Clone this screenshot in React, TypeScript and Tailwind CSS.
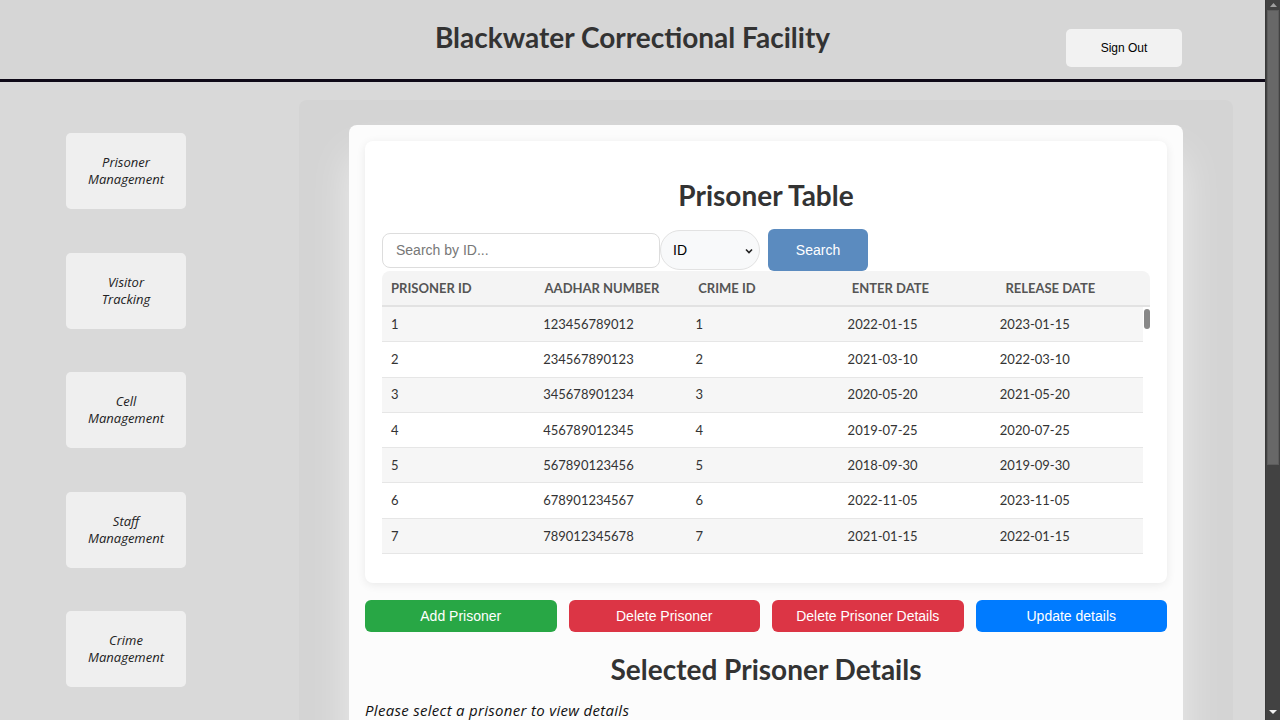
import React from 'react';

const navItems = ['Prisoner Management', 'Visitor Tracking', 'Cell Management', 'Staff Management', 'Crime Management'];

const prisoners = [
    { id: 1, aadhar: '123456789012', crime: 1, enter: '2022-01-15', release: '2023-01-15' },
    { id: 2, aadhar: '234567890123', crime: 2, enter: '2021-03-10', release: '2022-03-10' },
    { id: 3, aadhar: '345678901234', crime: 3, enter: '2020-05-20', release: '2021-05-20' },
    { id: 4, aadhar: '456789012345', crime: 4, enter: '2019-07-25', release: '2020-07-25' },
    { id: 5, aadhar: '567890123456', crime: 5, enter: '2018-09-30', release: '2019-09-30' },
    { id: 6, aadhar: '678901234567', crime: 6, enter: '2022-11-05', release: '2023-11-05' },
    { id: 7, aadhar: '789012345678', crime: 7, enter: '2021-01-15', release: '2022-01-15' },
];

const SideButton: React.FC<{ label: string }> = ({ label }) => (
    <button className="w-[120px] h-[76px] rounded-[5px] bg-[#efefef] px-[18px] text-[13px] leading-[17px] italic font-medium text-[#222] font-['Open_Sans',sans-serif]">
        {label}
    </button>
);

// headless shots hide native scrollbars, so the page one is drawn by hand
const PageScrollbar = () => (
    <div className="w-[15px] shrink-0 flex flex-col bg-[#424242] border-l border-[#3a3a3a]">
        <div className="h-[10px] flex items-center justify-center">
            <svg width="7" height="4" viewBox="0 0 7 4">
                <path d="M0 4L3.5 0L7 4z" fill="#a0a0a0" />
            </svg>
        </div>
        <div className="mx-[1px] h-[455px] bg-[#686868] border border-[#5c5c5c]" />
        <div className="flex-1" />
        <div className="h-[16px] flex items-center justify-center">
            <svg width="8" height="4" viewBox="0 0 8 4">
                <path d="M0 0L4 4L8 0z" fill="#f0f0f0" />
            </svg>
        </div>
    </div>
);

export default function App() {
    return (
        <div className="h-screen overflow-hidden flex bg-[#d9d9d9] font-['Liberation_Sans',Arial,sans-serif]">
            <div className="flex-1 min-w-0">
                {/* Header */}
                <header className="grid grid-cols-[1fr_auto_1fr] h-[82px] bg-[#d6d6d6] border-b-[3px] border-[#0f0a18]">
                    <div />
                    <h1 className="pt-[19px] text-[28px] leading-[36px] font-bold text-[#333] font-['Lato',sans-serif]">
                        Blackwater Correctional Facility
                    </h1>
                    <div className="flex justify-end pr-[83px] pt-[29px]">
                        <button className="w-[116px] h-[38px] rounded-[5px] bg-[#f2f2f2] text-[12px] text-black">Sign Out</button>
                    </div>
                </header>

                <div className="flex pt-[18px]">
                    {/* Sidebar */}
                    <nav className="w-[252px] shrink-0 flex flex-col items-center gap-[43.5px] pt-[33px]">
                        {navItems.map((item) => (
                            <SideButton key={item} label={item} />
                        ))}
                    </nav>

                    {/* Main */}
                    <main className="ml-[47px] w-[934px] rounded-[8px] bg-[#d4d4d4] px-[50px] pt-[25px] pb-[60px]">
                        <div className="rounded-[8px] bg-[#fcfcfc] p-[16px] pb-[300px] shadow-[0_30px_40px_rgba(255,255,255,0.55)]">
                            <section className="rounded-[8px] bg-white px-[17px] pt-[36px] pb-[29px] shadow-[0_2px_10px_rgba(0,0,0,0.08)]">
                                <h2 className="text-center text-[28px] leading-[36px] font-bold text-[#333] font-['Lato',sans-serif]">
                                    Prisoner Table
                                </h2>
                                <div className="mt-[16px] flex items-center">
                                    <input
                                        placeholder="Search by ID..."
                                        className="w-[278px] h-[35px] rounded-[8px] border border-[#ddd] bg-white px-[13px] text-[14px] text-[#333] placeholder:text-[#777] outline-none"
                                    />
                                    <div className="relative w-[100px] h-[40px] rounded-[20px] border border-[#e2e2e2] bg-[#f8f9fa] flex items-center pl-[12px] text-[14px] text-black">
                                        ID
                                        <svg className="absolute right-[6px] top-[17px]" width="8" height="6" viewBox="0 0 8 6">
                                            <path d="M1 1.5l3 3 3-3" fill="none" stroke="#222" strokeWidth="1.6" />
                                        </svg>
                                    </div>
                                    <button className="ml-[8px] w-[100px] h-[42px] rounded-[6px] bg-[#5b8bbf] text-[14px] text-white">Search</button>
                                </div>

                                {/* Table */}
                                <div className="font-['Lato',sans-serif]">
                                    <div className="grid grid-cols-5 h-[36px] items-center rounded-t-[8px] bg-[#f4f4f4] border-b-2 border-[#e2e2e2] pt-[1px] text-[13px] font-bold uppercase text-[#555]">
                                        <span className="pl-[9px]">Prisoner ID</span>
                                        <span className="pl-[9px]">Aadhar Number</span>
                                        <span className="pl-[9px]">Crime ID</span>
                                        <span className="pl-[9px]">Enter Date</span>
                                        <span className="pl-[9px]">Release Date</span>
                                    </div>
                                    <div className="flex">
                                        <div className="flex-1">
                                            {prisoners.map((p, i) => (
                                                <div
                                                    key={p.id}
                                                    className={`grid grid-cols-5 h-[35.3px] items-center border-b border-[#e6e6e6] pt-[1px] text-[13px] text-[#333] ${i % 2 === 0 ? 'bg-[#f6f6f6]' : 'bg-white'}`}
                                                >
                                                    <span className="pl-[9px]">{p.id}</span>
                                                    <span className="pl-[9px]">{p.aadhar}</span>
                                                    <span className="pl-[9px]">{p.crime}</span>
                                                    <span className="pl-[9px]">{p.enter}</span>
                                                    <span className="pl-[9px]">{p.release}</span>
                                                </div>
                                            ))}
                                        </div>
                                        {/* inner scrollbar */}
                                        <div className="w-[7px] pt-[2px] pl-[1px]">
                                            <div className="h-[20px] rounded-[3px] bg-[#888]" />
                                        </div>
                                    </div>
                                </div>
                            </section>

                            <div className="mt-[17px] grid grid-cols-4 gap-[12px] text-[14px] text-white">
                                <button className="h-[32px] rounded-[6px] bg-[#28a745]">Add Prisoner</button>
                                <button className="h-[32px] rounded-[6px] bg-[#dc3545]">Delete Prisoner</button>
                                <button className="h-[32px] rounded-[6px] bg-[#dc3545]">Delete Prisoner Details</button>
                                <button className="h-[32px] rounded-[6px] bg-[#007bff]">Update details</button>
                            </div>

                            <h2 className="mt-[19px] text-center text-[28px] leading-[36px] font-bold text-[#333] font-['Lato',sans-serif]">
                                Selected Prisoner Details
                            </h2>
                            <p className="mt-[13px] text-[15px] leading-[20px] tracking-[0.3px] italic font-medium text-[#111] font-['Open_Sans',sans-serif]">
                                Please select a prisoner to view details
                            </p>
                        </div>
                    </main>
                </div>
            </div>
            <PageScrollbar />
        </div>
    );
}
